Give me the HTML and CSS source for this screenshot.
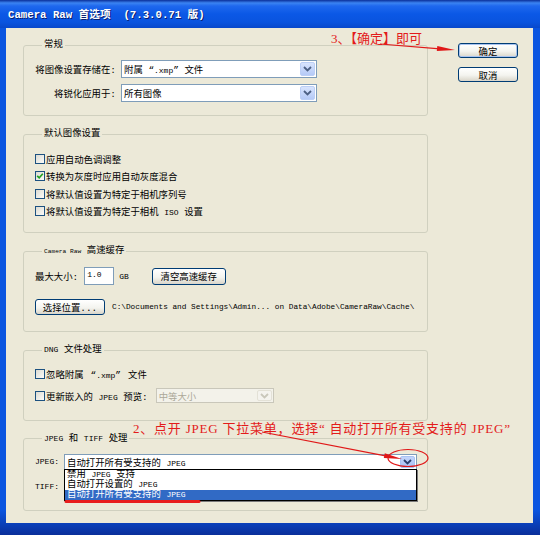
FILE: index.html
```html
<!DOCTYPE html>
<html lang="zh-CN">
  <head>
    <meta charset="UTF-8" />
    <meta name="viewport" content="width=device-width, initial-scale=1.0" />
    <title>Camera Raw 首选项</title>
    <link rel="stylesheet" href="styles.css">
  </head>

  <body>
    <div class="window">
      <div class="titlebar">Camera Raw 首选项  (7.3.0.71 版)</div>

      <div class="frame">
        <div class="dialog">
          <div class="groups">
            <fieldset class="group group-general">
              <legend>常规</legend>
              <div class="form-grid">
                <label>将图像设置存储在:</label>
                <div class="combo">
                  <span class="combo-text">附属 “<span class="en">.xmp</span>” 文件</span>
                  <span class="combo-btn"><svg width="9" height="6" viewBox="0 0 9 6"><path d="M1 1 L4.5 4.5 L8 1" fill="none" stroke="#4d6185" stroke-width="1.8"/></svg></span>
                </div>
                <label>将锐化应用于:</label>
                <div class="combo">
                  <span class="combo-text">所有图像</span>
                  <span class="combo-btn"><svg width="9" height="6" viewBox="0 0 9 6"><path d="M1 1 L4.5 4.5 L8 1" fill="none" stroke="#4d6185" stroke-width="1.8"/></svg></span>
                </div>
              </div>
            </fieldset>

            <fieldset class="group group-defaults">
              <legend>默认图像设置</legend>
              <div class="check-row"><span class="check"></span><span>应用自动色调调整</span></div>
              <div class="check-row">
                <span class="check"><svg width="8" height="8" viewBox="0 0 8 8"><path d="M1.2 3.8 L3.2 5.8 L6.8 1.8" fill="none" stroke="#21a121" stroke-width="1.7"/></svg></span>
                <span>转换为灰度时应用自动灰度混合</span>
              </div>
              <div class="check-row"><span class="check"></span><span>将默认值设置为特定于相机序列号</span></div>
              <div class="check-row"><span class="check"></span><span>将默认值设置为特定于相机 <span class="en">ISO</span> 设置</span></div>
            </fieldset>

            <fieldset class="group group-cache">
              <legend><span class="en-tiny">Camera Raw</span> 高速缓存</legend>
              <div class="cache-row">
                <span>最大大小:</span>
                <span class="text-input en">1.0</span>
                <span class="en">GB</span>
                <button class="btn btn-clear">清空高速缓存</button>
              </div>
              <div class="cache-row cache-path">
                <button class="btn btn-choose">选择位置...</button>
                <span class="path">C:\Documents and Settings\Admin... on Data\Adobe\CameraRaw\Cache\</span>
              </div>
            </fieldset>

            <fieldset class="group group-dng">
              <legend><span class="en">DNG</span> 文件处理</legend>
              <div class="check-row"><span class="check"></span><span>忽略附属<span class="spaced">“<span class="en">.xmp</span>”</span>文件</span></div>
              <div class="check-row dng-preview">
                <span class="check"></span>
                <span>更新嵌入的 <span class="en">JPEG</span> 预览:</span>
                <div class="combo combo-disabled">
                  <span class="combo-text">中等大小</span>
                  <span class="combo-btn"><svg width="9" height="6" viewBox="0 0 9 6"><path d="M1 1 L4.5 4.5 L8 1" fill="none" stroke="#c9c7ba" stroke-width="1.8"/></svg></span>
                </div>
              </div>
            </fieldset>

            <fieldset class="group group-jpeg">
              <legend><span class="en">JPEG</span> 和 <span class="en">TIFF</span> 处理</legend>
              <div class="jpeg-grid">
                <label class="en">JPEG:</label>
                <div class="combo combo-open">
                  <span class="combo-text">自动打开所有受支持的 <span class="en">JPEG</span></span>
                  <span class="combo-btn"><svg width="9" height="6" viewBox="0 0 9 6"><path d="M1 1 L4.5 4.5 L8 1" fill="none" stroke="#2b3f6e" stroke-width="1.8"/></svg></span>
                  <ul class="dropdown">
                    <li>禁用 <span class="en">JPEG</span> 支持</li>
                    <li>自动打开设置的 <span class="en">JPEG</span></li>
                    <li class="selected">自动打开所有受支持的 <span class="en">JPEG</span></li>
                  </ul>
                </div>
                <label class="en">TIFF:</label>
                <div class="combo"></div>
              </div>
            </fieldset>
          </div>

          <div class="actions">
            <button class="btn btn-default">确定</button>
            <button class="btn">取消</button>
          </div>
        </div>
      </div>

      <svg class="notes" width="540" height="535" viewBox="0 0 540 535">
        <text x="331" y="43" class="note">3、【确定】即可</text>
        <line x1="380" y1="44" x2="440" y2="48.8" />
        <polygon points="455,50 436.8,51.1 437.3,46.1" />

        <text x="133" y="433" class="note" textLength="377" lengthAdjust="spacing">2、点开 JPEG 下拉菜单，选择“ 自动打开所有受支持的 JPEG”</text>
        <line x1="262" y1="432" x2="388" y2="456.3" />
        <polygon points="402,459 383.8,458.1 384.8,453.2" />
        <ellipse cx="408" cy="458" rx="20" ry="8.5" />

        <path class="underline" d="M66 501.5 H199" />
      </svg>
    </div>
  </body>
</html>
```

FILE: styles.css
```css
* {
  box-sizing: border-box;
}

body {
  margin: 0;
  background: #0a246a;
  font-family: "Liberation Mono", "Noto Sans CJK SC", monospace;
  font-size: 9.4px;
  color: #000;
}

.window {
  position: relative;
  width: 540px;
  height: 535px;
  display: flex;
  flex-direction: column;
  background: #0a4fdc;
  box-shadow: inset 0 0 0 1px #00136b;
}

.titlebar {
  height: 28px;
  padding: 3px 0 0 8px;
  line-height: 24px;
  color: #fff;
  font-size: 10.7px;
  font-weight: bold;
  white-space: pre;
  text-shadow: 1px 1px 0 #0a1e6e;
  background: linear-gradient(to bottom, #0a2f9a 0, #3b84f2 3px, #1f68ee 6px, #0b58e6 14px, #0a54df 22px, #0848cb 28px);
}

.frame {
  flex: 1;
  display: flex;
  padding: 0 7px 12px 6px;
  background: linear-gradient(to bottom, #0a55e0 95%, #0a2f9a);
}

.dialog {
  flex: 1;
  display: flex;
  padding: 11px 0 0 17px;
  background: #ece9d8;
}

.groups {
  width: 405px;
}

.group {
  margin: 0 0 12px;
  padding: 9px 10px 12px 11px;
  min-width: 0;
  border: 1px solid #d0d0bf;
  border-radius: 3px;
}

.group legend {
  margin-left: 7px;
  padding: 0 2px;
  line-height: 12px;
}

.group-general {
  padding-bottom: 13px;
}

.group-defaults {
  padding-top: 10px;
}

.group-cache,
.group-dng {
  padding-bottom: 16px;
}

.group-jpeg {
  padding-bottom: 15px;
}

.en {
  font-size: 8px;
}

.en-tiny {
  font-size: 6.2px;
}

.spaced {
  margin: 0 7px;
}

/* combo boxes */
.form-grid {
  display: grid;
  grid-template-columns: 81px 196px;
  grid-auto-rows: 18px;
  column-gap: 5px;
  row-gap: 6px;
  align-items: center;
}

.form-grid label {
  text-align: right;
  white-space: nowrap;
}

.combo {
  display: flex;
  align-items: center;
  height: 18px;
  padding-left: 2px;
  border: 1px solid #7f9db9;
  background: #fff;
  white-space: nowrap;
}

.combo-text {
  flex: 1;
}

.combo-btn {
  align-self: stretch;
  width: 15px;
  margin: 1px;
  display: flex;
  align-items: center;
  justify-content: center;
  border: 1px solid #bccff6;
  border-radius: 2px;
  background: linear-gradient(#d8e4fd, #b5caf7);
}

.combo-disabled {
  width: 118px;
  height: 15px;
  margin-left: 7px;
  border-color: #c9c7ba;
  background: #f3f2ea;
  color: #aca899;
}

.combo-disabled .combo-btn {
  border-color: #e3e1d6;
  background: #f4f3ee;
}

/* checkboxes */
.check-row {
  display: flex;
  align-items: center;
  gap: 1px;
  height: 17.5px;
  white-space: nowrap;
}

.check {
  width: 10px;
  height: 10px;
  display: flex;
  align-items: center;
  justify-content: center;
  border: 1px solid #1c5180;
  background: linear-gradient(135deg, #dcdbd2, #fbfbf9);
}

.group-dng .check-row:first-child {
  height: 17px;
}

.dng-preview {
  height: 16px;
  margin-top: 5px;
}

/* cache */
.cache-row {
  display: flex;
  align-items: center;
  height: 18px;
  white-space: nowrap;
}

.text-input {
  width: 30px;
  height: 18px;
  margin: 0 5px 0 6px;
  padding: 2px 0 0 2px;
  border: 1px solid #7f9db9;
  background: #fff;
}

.cache-path {
  height: 16px;
  margin-top: 14px;
}

.path {
  margin-left: 7px;
  font-size: 7.75px;
}

/* buttons */
.btn {
  display: inline-flex;
  align-items: center;
  justify-content: center;
  padding: 0;
  font: inherit;
  color: #000;
  border: 1px solid #003c74;
  border-radius: 3px;
  background: linear-gradient(#fff, #f4f4ef 55%, #d9d5c9);
}

.btn-clear {
  width: 74px;
  height: 17px;
  margin-left: 23px;
}

.btn-choose {
  width: 70px;
  height: 16px;
}

.actions {
  display: flex;
  flex-direction: column;
  gap: 9px;
  margin: 4px 0 0 30px;
}

.actions .btn {
  width: 60px;
  height: 15px;
}

.btn-default {
  box-shadow: inset 0 0 0 1px #a9c4f0;
}

/* jpeg / tiff */
.jpeg-grid {
  display: grid;
  grid-template-columns: 29px 353px;
  grid-auto-rows: 16px;
  row-gap: 9px;
  align-items: center;
}

.jpeg-grid .combo {
  height: 16px;
}

.combo-open {
  position: relative;
}

.combo-open .combo-btn {
  border-color: #a9c2f3;
  background: linear-gradient(#c3d5fb, #a8c1f5);
}

.dropdown {
  position: absolute;
  z-index: 1;
  top: 100%;
  left: -1px;
  right: -1px;
  margin: 0;
  padding: 0;
  list-style: none;
  border: 1px solid #000;
  background: #fff;
  box-shadow: 1px 1px 0 #7a7a7a;
}

.dropdown li {
  height: 10px;
  padding-left: 2px;
  line-height: 10px;
}

.dropdown .selected {
  background: #316ac5;
  color: #fff;
}

/* red notes drawn over the screenshot */
.notes {
  position: absolute;
  z-index: 2;
  top: 0;
  left: 0;
  pointer-events: none;
}

.notes .note {
  font-family: "Liberation Serif", "Noto Sans CJK SC", serif;
  font-size: 13px;
  fill: #e31b1b;
  stroke: none;
}

.notes line,
.notes ellipse {
  stroke: #e01818;
  stroke-width: 1.2;
  fill: none;
}

.notes polygon {
  fill: #e01818;
}

.notes .underline {
  fill: none;
  stroke: #e81c1c;
  stroke-width: 3;
  stroke-linecap: round;
}
```
